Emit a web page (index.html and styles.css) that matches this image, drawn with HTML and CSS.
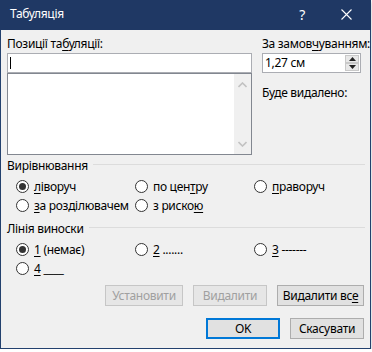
FILE: index.html
```html
<!DOCTYPE html>
<html lang="uk">
<head>
    <meta charset="UTF-8">
    <meta name="viewport" content="width=device-width, initial-scale=1.0">
    <title>Табуляція</title>
    <link rel="stylesheet" href="styles.css">
</head>
<body>
    <div class="dialog">
        <div class="titlebar">
            <span class="title">Табуляція</span>
            <span class="help">?</span>
            <svg class="close" width="11" height="11" viewBox="0 0 11 11">
                <path d="M0.5 0.5 L10.5 10.5 M10.5 0.5 L0.5 10.5" stroke="#ffffff" stroke-width="1.1" fill="none"/>
            </svg>
        </div>
        <div class="content">
            <div class="top">
                <div class="col-left">
                    <div class="label">Позиції та<u>б</u>уляції:</div>
                    <div class="pos-input"><span class="caret"></span></div>
                    <div class="pos-list">
                        <div class="scrollbar">
                            <svg width="9" height="6" viewBox="0 0 9 6"><path d="M0.5 5 L4.5 1 L8.5 5" stroke="#c2c2c2" stroke-width="1.6" fill="none"/></svg>
                            <svg width="9" height="6" viewBox="0 0 9 6"><path d="M0.5 1 L4.5 5 L8.5 1" stroke="#c2c2c2" stroke-width="1.6" fill="none"/></svg>
                        </div>
                    </div>
                </div>
                <div class="col-right">
                    <div class="label">За замов<u>ч</u>уванням:</div>
                    <div class="spin">
                        <span class="spin-value">1,27 см</span>
                        <div class="spin-btns">
                            <div class="spin-btn"><svg width="7" height="4" viewBox="0 0 7 4"><path d="M0 4 L3.5 0 L7 4 Z" fill="#222"/></svg></div>
                            <div class="spin-btn"><svg width="7" height="4" viewBox="0 0 7 4"><path d="M0 0 L3.5 4 L7 0 Z" fill="#222"/></svg></div>
                        </div>
                    </div>
                    <div class="label clear-label">Буде видалено:</div>
                </div>
            </div>

            <div class="group-head">Вирівнювання</div>
            <div class="radios">
                <div class="radio"><span class="dot checked"></span><u>л</u>іворуч</div>
                <div class="radio"><span class="dot"></span>по цен<u>т</u>ру</div>
                <div class="radio"><span class="dot"></span><u>п</u>раворуч</div>
                <div class="radio"><span class="dot"></span><u>з</u>а розділювачем</div>
                <div class="radio"><span class="dot"></span>з риско<u>ю</u></div>
            </div>

            <div class="group-head group-two">Лінія виноски</div>
            <div class="radios">
                <div class="radio"><span class="dot checked"></span><u>1</u>&nbsp;(немає)</div>
                <div class="radio"><span class="dot"></span><u>2</u>&nbsp;.......</div>
                <div class="radio"><span class="dot"></span><u>3</u>&nbsp;-------</div>
                <div class="radio"><span class="dot"></span><u>4</u>&nbsp;____</div>
            </div>

            <div class="button-row">
                <button class="btn disabled w-set">Установити</button>
                <button class="btn disabled w-del">Видалити</button>
                <button class="btn w-delall">Видалити вс<u>е</u></button>
            </div>
            <div class="button-row final-row">
                <button class="btn default w-ok">OK</button>
                <button class="btn w-cancel">Скасувати</button>
            </div>
        </div>
    </div>
</body>
</html>
```

FILE: styles.css
```css
body {
    margin: 0;
    background-color: #ffffff;
    font-family: "Noto Sans", "Open Sans", sans-serif;
    font-size: 12px;
    letter-spacing: -0.3px;
    color: #000000;
}
u {
    text-decoration-thickness: 1px;
    text-underline-offset: 2px;
}
.dialog {
    width: 369px;
    height: 348px;
    background-color: #f0f0f0;
    border: 1px solid #23416e;
    border-top: none;
    box-shadow: 0 2px 4px rgba(0, 0, 0, 0.25);
}
.titlebar {
    height: 30px;
    margin: 0 -1px;
    background-color: #1f3864;
    color: #ffffff;
    display: flex;
    align-items: center;
}
.title {
    margin-left: 10px;
    flex: 1;
    line-height: 16px;
    padding-bottom: 2px;
}
.help {
    font-size: 14px;
    margin-right: 36px;
    padding-bottom: 2px;
}
.close {
    margin-right: 19px;
    margin-bottom: 1px;
}
.content {
    padding: 6px 5px 0 6px;
}
.label {
    line-height: 16px;
    white-space: nowrap;
}
.top {
    display: grid;
    grid-template-columns: 245px 99px;
    column-gap: 10px;
}
.pos-input {
    margin-top: 1px;
    height: 18px;
    background-color: #ffffff;
    border: 1px solid #abadb3;
    display: flex;
    align-items: center;
}
.caret {
    margin-left: 2px;
    width: 1px;
    height: 12px;
    background-color: #000000;
}
.pos-list {
    height: 80px;
    background-color: #ffffff;
    border: 1px solid #828790;
    display: flex;
    justify-content: flex-end;
}
.scrollbar {
    width: 17px;
    background-color: #f0f0f0;
    display: flex;
    flex-direction: column;
    justify-content: space-between;
    align-items: center;
    padding: 8px 0 7px;
}
.spin {
    margin-top: 1px;
    height: 18px;
    background-color: #ffffff;
    border: 1px solid #abadb3;
    display: flex;
    align-items: stretch;
}
.spin-value {
    flex: 1;
    padding-left: 2px;
    line-height: 18px;
}
.spin-btns {
    width: 14px;
    display: flex;
    flex-direction: column;
    padding: 1px 1px 1px 0;
}
.spin-btn {
    flex: 1;
    background-color: #e8e8e8;
    border: 1px solid #c9c9c9;
    display: flex;
    align-items: center;
    justify-content: center;
}
.clear-label {
    margin-top: 12px;
}
.group-head {
    margin-top: 3px;
    display: flex;
    line-height: 16px;
}
.group-head::after {
    content: "";
    flex: 1;
    height: 1px;
    margin: 6px 0 0 5px;
    background-color: #dcdcdc;
}
.group-two {
    margin-top: 6px;
}
.radios {
    margin-top: 3px;
    padding-left: 9px;
    display: grid;
    grid-template-columns: 119px 119px auto;
}
.radio {
    height: 19px;
    display: flex;
    align-items: center;
    white-space: nowrap;
}
.dot {
    width: 11px;
    height: 11px;
    border: 1px solid #333333;
    border-radius: 50%;
    background-color: #ffffff;
    margin-right: 5px;
    display: flex;
    align-items: center;
    justify-content: center;
}
.dot.checked::after {
    content: "";
    width: 7px;
    height: 7px;
    border-radius: 50%;
    background-color: #333333;
}
.button-row {
    display: flex;
    justify-content: flex-end;
    gap: 10px;
    margin-top: 7px;
    margin-right: 1px;
}
.final-row {
    margin-top: 12px;
}
.btn {
    height: 21px;
    padding: 0;
    font: inherit;
    letter-spacing: inherit;
    color: #000000;
    background-color: #e1e1e1;
    border: 1px solid #adadad;
}
.btn.disabled {
    color: #a0a0a0;
    background-color: #e6e6e6;
    border-color: #c6c6c6;
}
.btn.default {
    border: 2px solid #0078d7;
}
.w-set { width: 78px; }
.w-del { width: 74px; }
.w-delall { width: 87px; }
.w-ok { width: 74px; }
.w-cancel { width: 74px; }
```
